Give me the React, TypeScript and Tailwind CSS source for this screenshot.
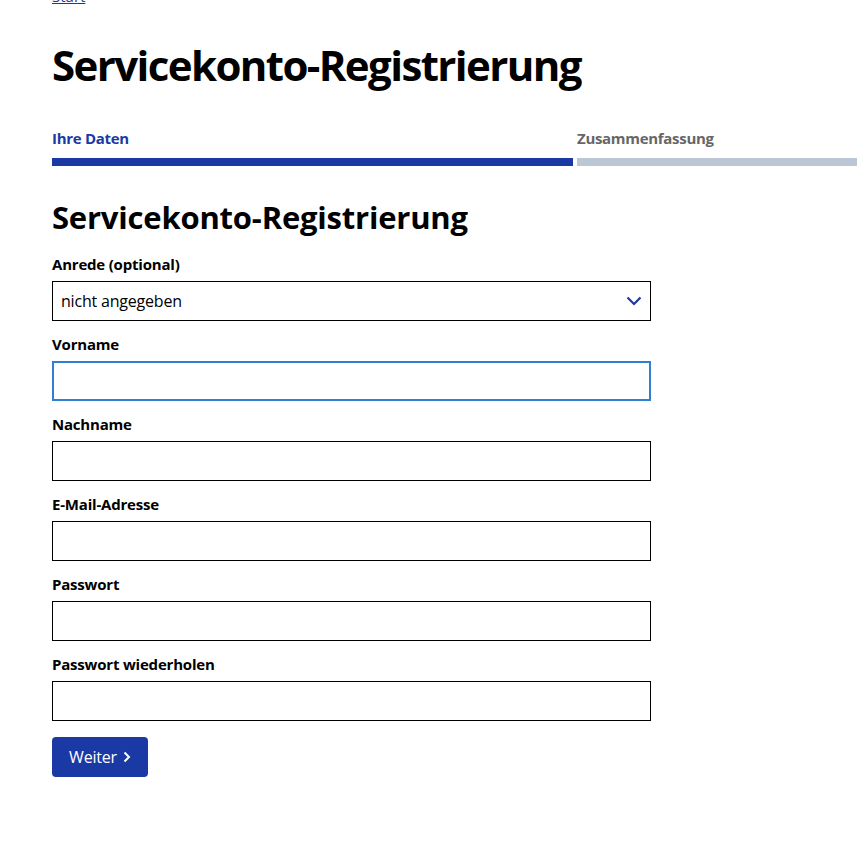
import React from "react";

const font = { fontFamily: '"Open Sans", "Noto Sans", sans-serif' };

function Field({ label, focused }: { label: string; focused?: boolean }) {
  return (
    <div className="flex flex-col">
      <label className="text-[15px] font-bold leading-[24px] h-[24px] text-black tracking-[-0.2px]">{label}</label>
      <div
        className={
          focused
            ? "mt-[5px] h-[40px] w-[599px] border-2 border-[#2f80d1] bg-white"
            : "mt-[5px] h-[40px] w-[599px] border border-black bg-white"
        }
      />
    </div>
  );
}

export default function App() {
  return (
    <div className="w-[857px] h-[859px] overflow-hidden bg-white text-black" style={font}>
      <div className="pl-[52px]">
        <a className="block mt-[-14px] h-[20px] text-[15px] leading-[20px] text-[#1b39a5] underline">Start</a>
        <h1 className="mt-[33px] text-[42px] font-bold leading-[52px] tracking-[-1.6px]">Servicekonto-Registrierung</h1>
        <div className="mt-[35px] flex gap-[4px]">
          <div className="w-[521px] flex flex-col">
            <span className="text-[15px] font-bold leading-[24px] text-[#1b39a5] tracking-[-0.3px]">Ihre Daten</span>
            <div className="mt-[8px] h-[8px] bg-[#1b39a5]" />
          </div>
          <div className="flex-1 flex flex-col">
            <span className="text-[15px] font-bold leading-[24px] text-[#666] tracking-[-0.3px]">Zusammenfassung</span>
            <div className="mt-[8px] h-[8px] bg-[#bcc7d6]" />
          </div>
        </div>
        <h2 className="mt-[31px] text-[31px] font-bold leading-[40px] tracking-[-0.2px]">Servicekonto-Registrierung</h2>
        <div className="mt-[15px] flex flex-col gap-[11px]">
          <div className="flex flex-col">
            <label className="text-[15px] font-bold leading-[24px] h-[24px] tracking-[-0.2px]">Anrede (optional)</label>
            <div className="mt-[5px] h-[40px] w-[599px] border border-black bg-white flex items-center justify-between pl-[8px] pr-[8px]">
              <span className="text-[16px] tracking-[-0.2px]">nicht angegeben</span>
              <svg width="16" height="10" viewBox="0 0 16 10" fill="none">
                <path d="M1.5 1.5 L8 8 L14.5 1.5" stroke="#1b39a5" strokeWidth="2.2" />
              </svg>
            </div>
          </div>
          <Field label="Vorname" focused />
          <Field label="Nachname" />
          <Field label="E-Mail-Adresse" />
          <Field label="Passwort" />
          <Field label="Passwort wiederholen" />
        </div>
        <button className="mt-[16px] h-[40px] w-[96px] rounded-[4px] bg-[#1b39a5] text-white text-[16px] flex items-center justify-center gap-[6px] tracking-[-0.2px]">
          <span>Weiter</span>
          <svg width="8" height="12" viewBox="0 0 8 12" fill="none">
            <path d="M1.5 1.5 L6 6 L1.5 10.5" stroke="white" strokeWidth="2" />
          </svg>
        </button>
      </div>
    </div>
  );
}
